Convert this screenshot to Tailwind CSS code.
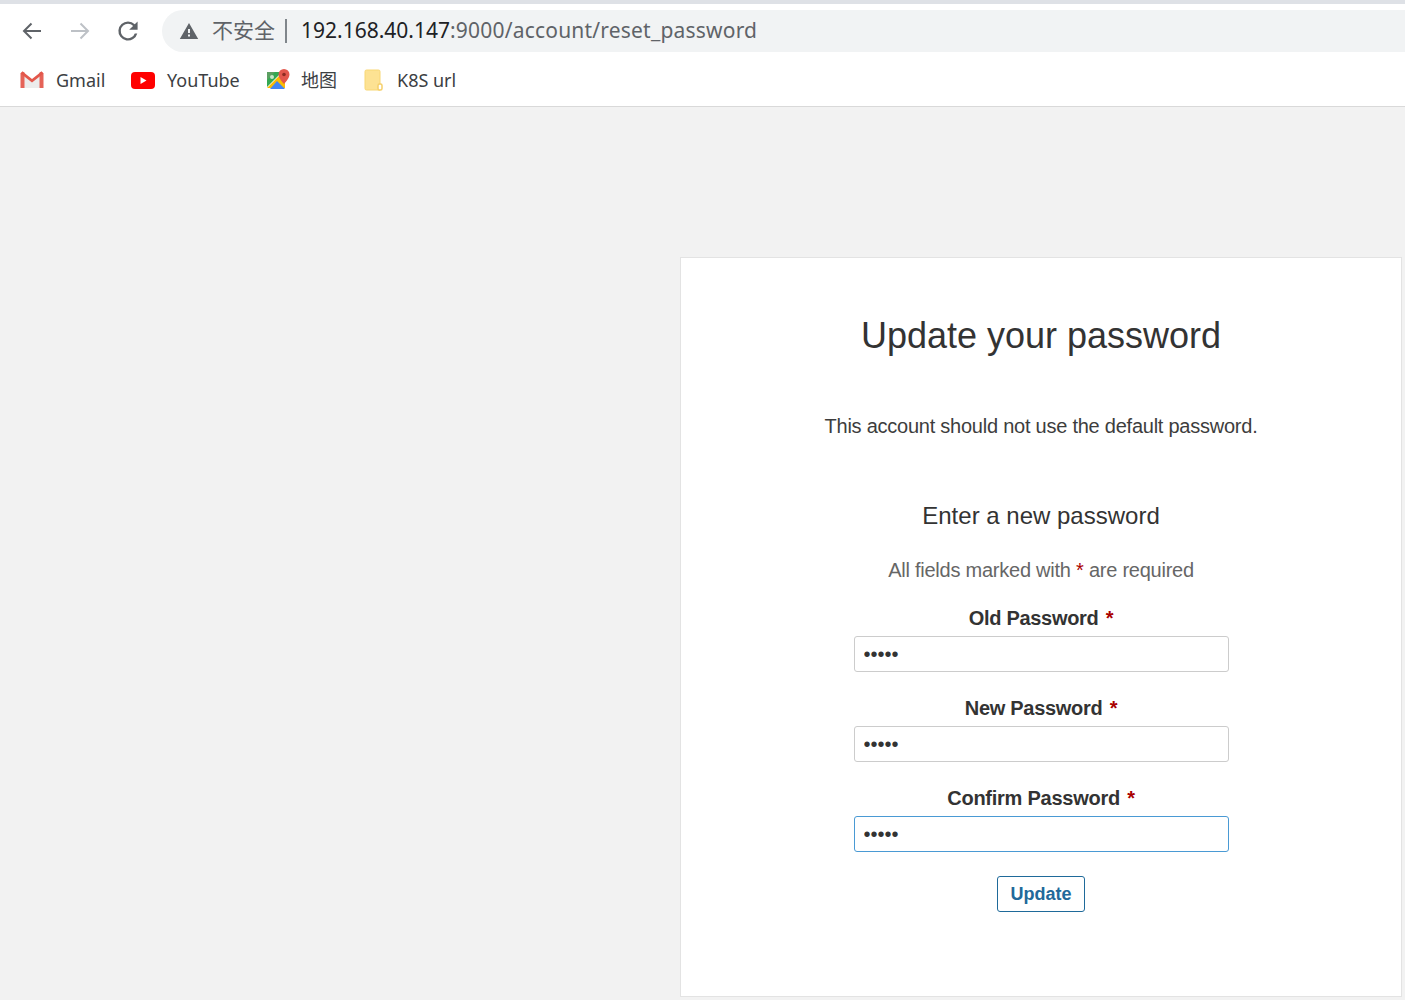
<!DOCTYPE html>
<html lang="en">
<head>
    <meta charset="UTF-8">
    <meta name="viewport" content="width=device-width, initial-scale=1.0">
    <title>Update your password</title>
    <script src="https://cdn.jsdelivr.net/npm/@tailwindcss/browser@4"></script>
</head>
<body class="bg-[#f2f2f2] h-[1000px] overflow-hidden font-['Liberation_Sans',sans-serif]">

    <!-- browser chrome -->
    <header class="bg-white h-[107px] border-b border-[#d9d9d9] border-t-4 border-t-[#dee1e6] font-['Noto_Sans','Noto_Sans_CJK_SC',sans-serif]">
        <div class="flex items-start h-[52px] pt-[6px]">
            <div class="flex items-center h-[42px] w-[162px] pl-[20px] gap-[24px] shrink-0">
                <svg class="w-6 h-6" viewBox="0 0 24 24" fill="none" stroke="#5f6368" stroke-width="2"><path d="M21 12H4M11.500 4.500 4 12l7.500 7.500"/></svg>
                <svg class="w-6 h-6" viewBox="0 0 24 24" fill="none" stroke="#bdc1c6" stroke-width="2"><path d="M3 12h17M12.500 4.500 20 12l-7.500 7.500"/></svg>
                <svg class="w-6 h-6" viewBox="2 2 20 20" fill="#5f6368"><path d="M17.650 6.350A7.960 7.960 0 0 0 12 4a8 8 0 1 0 7.730 10h-2.080A6 6 0 1 1 12 6c1.660 0 3.140.690 4.220 1.780L13 11h7V4l-2.350 2.350z"/></svg>
            </div>
            <div class="flex-1 h-[42px] bg-[#f1f3f4] rounded-l-full flex items-center pl-[17px] text-[21px] whitespace-nowrap -mr-4">
                <svg class="w-[20px] h-[20px] mr-[13px]" viewBox="0 0 20 20" fill="#5f6368"><path d="M10 2 .8 18h18.400L10 2zm1 13.500H9v-2h2v2zm0-3.500H9V8h2v4z"/></svg>
                <span class="text-[#5f6368] w-[64px]">不安全</span>
                <span class="w-[2px] h-[24px] bg-[#80868b] ml-[9px] mr-[14px]"></span>
                <span class="text-[#202124]">192.168.40.147</span><span class="text-[#5f6368] tracking-[0.2px]">:9000/account/reset_password</span>
            </div>
        </div>
        <nav class="flex items-center h-[48px] text-[18px] text-[#3c4043] whitespace-nowrap">
            <div class="flex items-center ml-[20px] w-[111px]">
                <svg class="w-[24px] h-[18px] mr-[12px]" viewBox="0 0 24 18"><path d="M2 17V2h2l8 6.500L20 2h2v15z" fill="#ececec"/><path d="M.5 17V2.500L2.500.5 4.500 1.500V17zM23.500 17V2.500L21.500.5 19.500 1.500V17z" fill="#e56358"/><path d="M2.500.5 12 8l9.500-7.500 2 2L12 11.500.5 2.500z" fill="#e3574b"/></svg>
                <span>Gmail</span>
            </div>
            <div class="flex items-center w-[136px]">
                <svg class="w-[24px] h-[17px] mr-[12px]" viewBox="0 0 24 17"><rect width="24" height="17" rx="4" fill="#f00"/><path d="M9.500 5v7l6-3.500z" fill="#fff"/></svg>
                <span>YouTube</span>
            </div>
            <div class="flex items-center w-[97px]">
                <svg class="w-[23px] h-[22px] mr-[11px]" viewBox="0 0 23 22"><path d="M0 3h15l-15 15z" fill="#34a853"/><path d="M0 3h8L0 11z" fill="#5c9f62"/><circle cx="5" cy="8" r="2" fill="#c8e6c9"/><path d="M0 19 12 7l6 7v5z" fill="#fbbc04"/><path d="M3 20 10 12l8 8z" fill="#4285f4"/><path d="M17 0a5.500 5.500 0 0 0-5.500 5.500C11.500 9.500 17 15 17 15s5.500-5.500 5.500-9.500A5.500 5.500 0 0 0 17 0z" fill="#e2574c"/><circle cx="17" cy="5.500" r="1.800" fill="#8e2b22"/></svg>
                <span class="text-[#3c4043]">地图</span>
            </div>
            <div class="flex items-center">
                <svg class="w-[19px] h-[22px] mr-[14px]" viewBox="0 0 19 22"><path d="M1 2.500A1.500 1.500 0 0 1 2.500 1h12A1.500 1.500 0 0 1 16 2.500V21H2.500A1.500 1.500 0 0 1 1 19.500z" fill="#fde293" stroke="#f8d775"/><rect x="14" y="15" width="4" height="6" rx="1.500" fill="#fff" stroke="#f5cf6a" stroke-width="1.500"/></svg>
                <span>K8S url</span>
            </div>
        </nav>
    </header>

    <!-- page -->
    <main class="flex justify-end pr-[3px] pt-[150px]">
        <section class="w-[722px] h-[740px] bg-white border border-[#e3e3e3] flex flex-col items-center text-[#333]">
            <h1 class="text-[36px] leading-[40px] mt-[58px]">Update your password</h1>
            <p class="text-[20px] leading-[24px] mt-[58px] tracking-[-0.24px] text-[#3d3d3d]">This account should not use the default password.</p>
            <h2 class="text-[24px] leading-[28px] mt-[64px]">Enter a new password</h2>
            <p class="text-[20px] leading-[24px] mt-[28px] text-[#666] tracking-[-0.24px]">All fields marked with <span class="text-[#a00]">*</span> are required</p>

            <form class="w-[375px] flex flex-col items-center mt-[24px]">
                <label class="text-[20px] leading-[24px] font-bold tracking-[-0.3px] mb-[6px]">Old Password <span class="text-[#a00] ml-[2px]">*</span></label>
                <input type="password" value="12345" class="w-full h-[36px] border border-[#ccc] rounded-[3px] px-[9px] text-[20px] text-[#333] outline-none">
                <label class="text-[20px] leading-[24px] font-bold tracking-[-0.3px] mt-[24px] mb-[6px]">New Password <span class="text-[#a00] ml-[2px]">*</span></label>
                <input type="password" value="12345" class="w-full h-[36px] border border-[#ccc] rounded-[3px] px-[9px] text-[20px] text-[#333] outline-none">
                <label class="text-[20px] leading-[24px] font-bold tracking-[-0.25px] mt-[24px] mb-[6px]">Confirm Password <span class="text-[#a00] ml-[2px]">*</span></label>
                <input type="password" value="12345" class="w-full h-[36px] border border-[#4a9ad4] rounded-[3px] px-[9px] text-[20px] text-[#333] outline-none">
                <button type="button" class="mt-[24px] w-[88px] h-[36px] border border-[#1f6a9a] rounded-[3px] text-[18px] font-bold text-[#22699a]">Update</button>
            </form>
        </section>
    </main>
</body>
</html>
